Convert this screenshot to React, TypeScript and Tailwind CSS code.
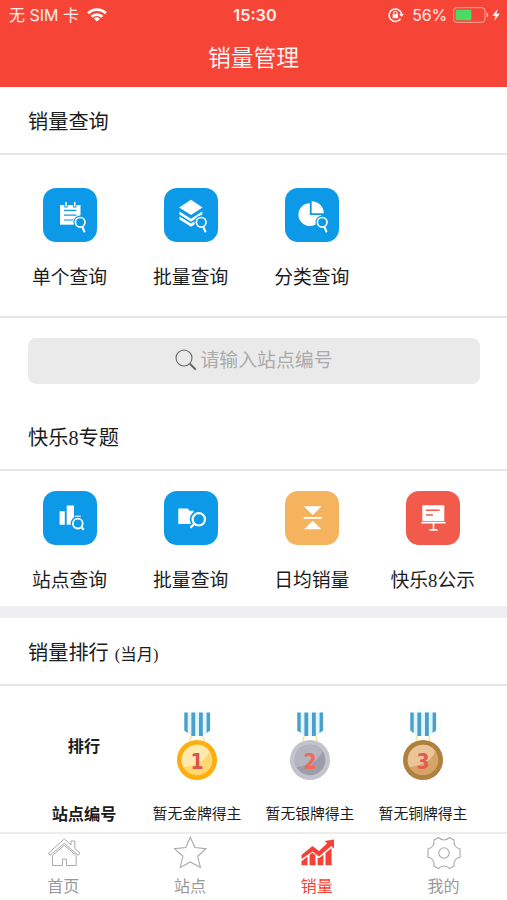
import type { ReactNode } from "react";
import clsx from "clsx";

const SERIF = "font-['Liberation_Serif','Noto_Sans_CJK_SC',serif]";
const SANS = "font-['Inter','Noto_Sans_CJK_SC',sans-serif]";

type Entry = {
  label: string;
  color: string;
  icon: ReactNode;
};

// Small magnifier that overlaps the lower right of the query icons
function Lens() {
  return (
    <g fill="none" stroke="#0c9ae8" strokeLinecap="round">
      <path d="M39.3 39L41.6 44" strokeWidth="4" />
      <circle cx="37.2" cy="34.3" r="5" fill="#0c9ae8" strokeWidth="3.6" />
      <circle cx="37.2" cy="34.3" r="4.8" stroke="#fff" strokeWidth="1.7" />
      <path d="M39.6 39.5L41.4 43.5" stroke="#fff" strokeWidth="2" />
    </g>
  );
}

const queryEntries: Entry[] = [
  {
    label: "单个查询",
    color: "bg-[#0c9ae8]",
    icon: (
      <>
        <path d="M17 17h20.5v19.7H17z" fill="#fff" />
        <path d="M23 14v5.4M31.7 14v5.4" stroke="#0c9ae8" strokeWidth="3.4" />
        <path d="M23 14v4.5M31.7 14v4.5" stroke="#fff" strokeWidth="1.5" />
        <path d="M21 22.4h12.4M21 27.2h12.4M21 32h9" stroke="#0c9ae8" strokeWidth="1.2" />
        <Lens />
      </>
    ),
  },
  {
    label: "批量查询",
    color: "bg-[#0c9ae8]",
    icon: (
      <>
        <path d="M27 11.8L38.5 19.4L27 27L15.2 19.4z" fill="#fff" />
        <path d="M15.5 23.5L27 30.8L38.3 23.5V26.4L27 33.7L15.5 26.4z" fill="#fff" />
        <path d="M15.5 28.4L27 35.6L38.3 28.4V31.4L27 38.8L15.5 31.4z" fill="#fff" />
        <Lens />
      </>
    ),
  },
  {
    label: "分类查询",
    color: "bg-[#0c9ae8]",
    icon: (
      <>
        <path d="M24.8 15.2A11.4 11.4 0 1 0 36.2 26.9H24.8z" fill="#fff" />
        <path d="M26.7 13.2A12 12 0 0 1 38.7 25.2H26.7z" fill="#fff" />
        <Lens />
      </>
    ),
  },
];

const happyEntries: Entry[] = [
  {
    label: "站点查询",
    color: "bg-[#0c9ae8]",
    icon: (
      <>
        <path d="M16.6 20.3h5.2v13.5h-5.2zM23.7 14.5h7.2v19.3h-7.2z" fill="#fff" />
        <circle cx="34.8" cy="32.6" r="7.2" fill="#0c9ae8" />
        <path d="M31.7 25.2h6.2" stroke="#fff" strokeWidth="1.1" />
        <circle cx="34.8" cy="32.6" r="4.9" fill="none" stroke="#fff" strokeWidth="1.8" />
        <path d="M38.4 36.3L40.8 38.8" stroke="#fff" strokeWidth="2" />
      </>
    ),
  },
  {
    label: "批量查询",
    color: "bg-[#0c9ae8]",
    icon: (
      <>
        <path d="M14.3 17.5h9.3l2 2.2h4v13.2H14.3z" fill="#fff" />
        <circle cx="34.8" cy="28.3" r="9" fill="#0c9ae8" />
        <circle cx="34.8" cy="28.3" r="6.2" fill="none" stroke="#fff" strokeWidth="2.2" />
        <path d="M29.8 33.4L26.4 36.8" stroke="#fff" strokeWidth="2.3" />
      </>
    ),
  },
  {
    label: "日均销量",
    color: "bg-[#f5b35d]",
    icon: (
      <>
        <path d="M18.8 15.3h17.8L27.7 24zM27.7 29.7l8.6 8.6H19.1z" fill="#fff" />
        <path d="M18.8 26.9h18" stroke="#fff" strokeWidth="1.8" />
      </>
    ),
  },
  {
    label: "快乐8公示",
    color: "bg-[#f25b4b]",
    icon: (
      <>
        <rect x="16.3" y="14.3" width="22" height="15.8" rx="1" fill="#fff" />
        <path d="M20 19.3h13.6M20 23.9h7" stroke="#f25b4b" strokeWidth="1.5" />
        <path d="M15.3 31.6h24.2M27.5 31.6v7M23.5 38.9h8" stroke="#fff" strokeWidth="1.6" />
      </>
    ),
  },
];

const medals = [
  { rank: 1, text: "暂无金牌得主", rim: "#fcae0c", face: "#ffd670", shine: "#ffe9ae", digit: "#d9534f" },
  { rank: 2, text: "暂无银牌得主", rim: "#c3c3ce", face: "#9c9caa", shine: "#b4b4c0", digit: "#f0695a" },
  { rank: 3, text: "暂无铜牌得主", rim: "#b0803f", face: "#d5a467", shine: "#eac597", digit: "#e85a4f" },
];

function EntryGrid({ entries }: { entries: Entry[] }) {
  return (
    <div className="flex pl-[9px]">
      {entries.map((entry, i) => (
        <div key={i} className="flex w-[121.1px] flex-col items-center">
          <div className={clsx("size-[54px] rounded-[13px]", entry.color)}>
            <svg viewBox="0 0 54 54" className="size-full">
              {entry.icon}
            </svg>
          </div>
          <span className="mt-[22px] text-[18.8px] leading-7 whitespace-nowrap">{entry.label}</span>
        </div>
      ))}
    </div>
  );
}

function Medal({ medal }: { medal: (typeof medals)[number] }) {
  return (
    <svg viewBox="0 0 40 68" className="h-[68px] w-10">
      <path d="M14.5 23L12.8 29M25.5 23L27.2 29" stroke="#fbe08f" strokeWidth="1.4" />
      <path d="M7.3 .5h25.8v18L26 24H14.3L7.3 18.5z" fill="#e2f5fb" />
      <path d="M7.3 .5h3.4v20.4L7.3 18.5zM14.4 .5h3.8V24h-3.8zM22 .5h3.8V24H22zM29.6 .5h3.5v18l-3.5 2.4z" fill="#4a9fcb" />
      <circle cx="20" cy="48" r="20" fill={medal.rim} />
      <circle cx="20" cy="48" r="15.3" fill={medal.face} />
      <path d="M6.5 55.2A15.3 15.3 0 0 1 32.5 39.2Q28 52 6.5 55.2z" fill={medal.shine} />
      <text
        x="20"
        y="57"
        textAnchor="middle"
        fill={medal.digit}
        className="font-['DejaVu_Sans_Condensed','DejaVu_Sans',sans-serif] text-[21px] font-bold"
      >
        {medal.rank}
      </text>
    </svg>
  );
}

function StatusBar() {
  return (
    <div className="flex h-[30px] items-center text-white/90">
      <div className="flex flex-1 items-center pl-[9px]">
        <span className="text-[16px] leading-6">无 SIM 卡</span>
        <svg viewBox="0 0 20 14" className="ml-2 h-[14px] w-5" fill="none" stroke="#fff" strokeWidth="2.8">
          <path d="M1.2 5.3A12.5 12.5 0 0 1 18.8 5.3" />
          <path d="M4.6 8.7A7.8 7.8 0 0 1 15.4 8.7" />
          <path d="M10 13.6L7 10.7A4.3 4.3 0 0 1 13 10.7z" fill="#fff" stroke="none" />
        </svg>
      </div>
      <span className="text-[16.3px] font-semibold">15:30</span>
      <div className="flex flex-1 items-center justify-end pr-[6px]">
        <svg viewBox="0 0 16 16" className="h-4 w-4" fill="none" stroke="#fff" strokeWidth="1.5">
          <path d="M12.6 11.8A6.3 6.3 0 1 1 13.6 7" />
          <path d="M11.3 7h4.4l-2.2 3z" fill="#fff" stroke="none" />
          <rect x="4.6" y="7.2" width="5.4" height="4" fill="#fff" stroke="none" />
          <path d="M5.7 7.4V5.8a1.6 1.6 0 0 1 3.2 0v1.6" strokeWidth="1.1" />
        </svg>
        <span className="mr-px ml-2 text-[16px] tracking-[-0.2px]">56%</span>
        <svg viewBox="0 0 48 16" className="ml-[5px] h-4 w-12">
          <rect x=".6" y=".7" width="31.4" height="14.6" rx="3" fill="none" stroke="#fff" strokeOpacity=".55" />
          <rect x="2.6" y="2.8" width="15.8" height="10.4" rx="1" fill="#4cd964" />
          <path d="M33.6 5.2a3 3 0 0 1 0 5.4z" fill="#fff" fillOpacity=".6" />
          <path d="M44.8 1.8L39.4 8.7h3.2L41.2 14L46.8 6.8h-3.4z" fill="#fff" />
        </svg>
      </div>
    </div>
  );
}

function TabBar() {
  return (
    <nav className="flex h-[68px] border-t-2 border-[#ececec] bg-white text-[16px] text-[#999]">
      <div className="flex flex-1 flex-col items-center pt-[2px]">
        <svg viewBox="0 0 34 34" className="ml-[2px] size-[34px]" fill="none" stroke="#aaa" strokeWidth="1">
          <path d="M1.5 17L17.3 3L24 9V5h3.8v7.5L33 17L31.3 19.3L17.3 7.3L3 19.3z" />
          <path d="M5.5 19.5V29.5h10V23h4v6.5h9.7V19.5L17.3 9.3z" />
        </svg>
        <span className="mt-[5px] leading-6">首页</span>
      </div>
      <div className="flex flex-1 flex-col items-center pt-[2px]">
        <svg viewBox="0 0 34 34" className="size-[34px]" fill="none" stroke="#aaa" strokeWidth="1.1">
          <path d="M17.3 1.2L21.8 11.5L33 12.6L24.7 20.3L27.4 31.5L17.3 26L7.3 31.5L9.9 20.3L1.5 12.6L12.8 11.5z" />
        </svg>
        <span className="mt-[5px] leading-6">站点</span>
      </div>
      <div className="flex flex-1 flex-col items-center pt-[2px] text-[#f44336]">
        <svg viewBox="0 0 34 34" className="size-[34px]" fill="#f44336">
          <path d="M1.5 23V19L12.5 10L19 15L27.2 7.3L24.7 5L34 3.5V12.5L31.3 10L19 20.5L12.5 15.5z" />
          <path d="M1.5 25.2L7.5 20.4V29.2H1.5zM9.6 18.7L12.5 16.8L15.5 19.2V29.2H9.6zM17.6 21.5L19 22.3L23.4 18.8V29.2H17.6zM25.5 17L31.6 12V29.2H25.5z" />
        </svg>
        <span className="mt-[5px] leading-6">销量</span>
      </div>
      <div className="flex flex-1 flex-col items-center pt-[2px]">
        <svg viewBox="0 0 34 34" className="size-[34px]" fill="none" stroke="#aaa" strokeWidth="1.1">
          <path d="M11.5 1.5Q14 4 17 4Q20 4 22.5 1.5L27 4Q26.5 8 28.2 10Q30 12.2 33 12.7V21.3Q30 21.5 28.2 24Q26.5 26.5 27 30L22.5 32.5Q20 30 17 30Q14 30 11.5 32.5L7 30Q7.5 26.5 5.8 24Q4 21.5 1 21.3V12.7Q4 12.2 5.8 10Q7.5 8 7 4z" strokeLinejoin="round" />
          <circle cx="17" cy="17" r="5.2" />
        </svg>
        <span className="mt-[5px] leading-6">我的</span>
      </div>
    </nav>
  );
}

export default function App() {
  return (
    <div className={clsx("flex h-[900px] w-[507px] flex-col overflow-hidden bg-white text-[#1c1c1c]", SERIF)}>
      <header className={clsx("h-[87px] shrink-0 bg-[#f64436] text-white", SANS)}>
        <StatusBar />
        <h1 className="pt-px text-center text-[22.8px] leading-[54px] text-white/95">销量管理</h1>
      </header>

      <h2 className="h-[68px] shrink-0 border-b-2 border-[#e6e6e6] pt-[2px] pl-7 text-[20.2px] leading-[66px]">
        销量查询
      </h2>
      <section className="h-[163px] shrink-0 border-b-2 border-[#e6e6e6] pt-[33px]">
        <EntryGrid entries={queryEntries} />
      </section>

      <div className="mx-7 mt-5 flex h-[46px] w-[452px] shrink-0 items-center justify-center rounded-lg bg-[#eaeaea]">
        <svg viewBox="0 0 22 22" className="mb-[2px] size-[22px]" fill="none" stroke="#666">
          <circle cx="9" cy="9" r="8" strokeWidth="1.1" />
          <path d="M14.8 14.8L20.8 20.6" strokeWidth="2" />
        </svg>
        <span className="ml-[3px] text-[18.9px] leading-7 text-[#aaa]">请输入站点编号</span>
      </div>

      <h2 className="mt-5 h-[67px] shrink-0 border-b-2 border-[#e6e6e6] pt-px pl-7 text-[20.2px] leading-[66px]">
        快乐8专题
      </h2>
      <section className="h-[135px] shrink-0 pt-[20px]">
        <EntryGrid entries={happyEntries} />
      </section>
      <div className="h-3 shrink-0 bg-[#efeff1]" />

      <h2 className="h-[68px] shrink-0 border-b-2 border-[#e6e6e6] pt-[2px] pl-7 text-[20.2px] leading-[66px]">
        销量排行 <span className="ml-px text-[16.4px]">(当月)</span>
      </h2>
      <section className="grid h-[146px] shrink-0 grid-cols-[repeat(4,113px)] grid-rows-[68px_24px] content-start justify-items-center gap-y-[22px] pt-[26px] pl-[27.5px] text-[14.8px] leading-6">
        <b className="self-center pt-[2px] text-[16.2px]">排行</b>
        {medals.map((medal) => (
          <Medal key={medal.rank} medal={medal} />
        ))}
        <b className="pt-px text-[16.2px]">站点编号</b>
        {medals.map((medal) => (
          <span key={medal.rank}>{medal.text}</span>
        ))}
      </section>

      <TabBar />
    </div>
  );
}
